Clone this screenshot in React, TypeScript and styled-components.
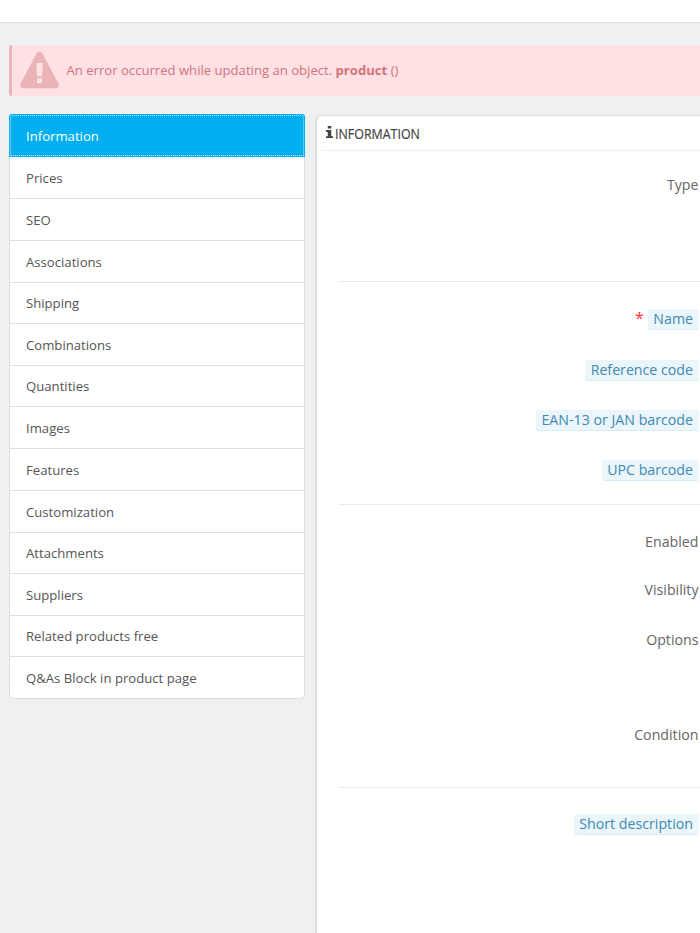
import React from "react";
import styled, { createGlobalStyle } from "styled-components";

const GlobalStyle = createGlobalStyle`
  *, *::before, *::after { box-sizing: border-box; }
  html, body { margin: 0; height: 100%; overflow: hidden; }
  body {
    background: #eff0f2;
    color: #555;
    font-family: "Open Sans", "Liberation Sans", sans-serif;
    font-size: 14.2px;
  }
`;

const Page = styled.div`
  height: 933px;
  overflow: hidden;
  display: flex;
  flex-direction: column;
`;

const TopBar = styled.header`
  flex: none;
  height: 23px;
  background: #fff;
  border-bottom: 1px solid #dcdedf;
`;

const Alert = styled.div`
  flex: none;
  display: flex;
  align-items: center;
  height: 51px;
  margin: 22px 0 0 9px;
  padding-left: 8px;
  background: #ffe1e3;
  border-left: 3px solid #eab3b7;
  border-radius: 3px 0 0 3px;
  color: #d2727c;
`;

const WarningIcon = styled.svg`
  flex: none;
  width: 39px;
  height: 38px;
  margin: -2px 8px 0 -0.5px;
`;

const AlertText = styled.span`
  padding-bottom: 1px;
  font-size: 13.12px;
  line-height: 18px;
  white-space: nowrap;
`;

const Columns = styled.div`
  flex: 1;
  min-height: 0;
  display: flex;
  gap: 11px;
  margin-top: 18px;
  padding-left: 9px;
`;

const Tabs = styled.nav`
  flex: none;
  width: 296px;
  height: 585px;
  display: flex;
  flex-direction: column;
  background: #fff;
  border: 1px solid #dddedf;
  border-radius: 4px;
`;

const Tab = styled.a<{ $active?: boolean; $height: number }>`
  flex: none;
  display: flex;
  align-items: center;
  height: ${(p) => p.$height}px;
  padding: 0.8px 16px 0;
  border-bottom: 1px solid #dfdfdf;
  font-size: 13.15px;
  line-height: 18px;

  &:last-child { border-bottom: 0; padding-top: 0; }

  ${(p) =>
    p.$active &&
    `
    margin: -1px -1px 0;
    padding: 1px 17px 0;
    color: #fff;
    background: #00aff0;
    border: 0;
    outline: 1px dotted #b5e7fa;
    outline-offset: -2px;
    border-radius: 3px 3px 0 0;
  `}
`;

const Panel = styled.main`
  flex: 1;
  min-width: 0;
  margin: 1px 0 0 -1px;
  background: #fff;
  border: solid #dbdee1;
  border-width: 1px 0 0 2px;
  border-radius: 6px 0 0 0;
  padding-left: 5px;
`;

const PanelHeading = styled.h3`
  display: flex;
  align-items: center;
  gap: 2px;
  height: 35px;
  margin: 0;
  padding-left: 4px;
  border-bottom: 1px solid #eee;
`;

const InfoIcon = styled.svg`
  width: 7px;
  height: 12px;
  margin-top: -2px;
`;

const HeadingText = styled.span`
  font-size: 14.8px;
  font-weight: 400;
  line-height: 20px;
  color: #444;
  -webkit-text-stroke: 0.2px #444;
  transform: scaleX(0.84);
  transform-origin: left center;
`;

const Section = styled.section<{ $height: number }>`
  display: flow-root;
  height: ${(p) => p.$height}px;
  margin-left: 16px;
  border-bottom: 1px solid #eaeaea;

  &:last-child { border-bottom: 0; }
`;

const Field = styled.div<{ $before: number }>`
  display: flex;
  justify-content: flex-end;
  align-items: center;
  height: 20px;
  margin-top: ${(p) => p.$before}px;
  padding-right: 1.5px;
  color: #666;
`;

const Hint = styled.span`
  height: 21px;
  padding: 0 5.5px;
  line-height: 19px;
  color: #3f89b3;
  background: #ebf6fb;
  border-bottom: 1px solid #d9ebf3;
  border-radius: 3px;
`;

const Required = styled.span`
  margin: -2px 4px 0 0;
  font-size: 16px;
  line-height: 20px;
  color: #f33;
`;

const tabs: [string, number][] = [
  ["Information", 43],
  ["Prices", 42],
  ["SEO", 42],
  ["Associations", 42],
  ["Shipping", 41],
  ["Combinations", 42],
  ["Quantities", 41],
  ["Images", 42],
  ["Features", 42],
  ["Customization", 42],
  ["Attachments", 41],
  ["Suppliers", 42],
  ["Related products free", 41],
  ["Q&As Block in product page", 41],
];

type FieldDef = { label: string; before: number; hint?: boolean; required?: boolean };

const sections: { height: number; fields: FieldDef[] }[] = [
  { height: 131, fields: [{ label: "Type", before: 23 }] },
  {
    height: 223,
    fields: [
      { label: "Name", before: 27, hint: true, required: true },
      { label: "Reference code", before: 31, hint: true },
      { label: "EAN-13 or JAN barcode", before: 30, hint: true },
      { label: "UPC barcode", before: 30, hint: true },
    ],
  },
  {
    height: 283,
    fields: [
      { label: "Enabled", before: 26 },
      { label: "Visibility", before: 28 },
      { label: "Options", before: 30 },
      { label: "Condition", before: 75 },
    ],
  },
  { height: 145, fields: [{ label: "Short description", before: 26, hint: true }] },
];

export default function App() {
  return (
    <>
      <GlobalStyle />
      <Page>
        <TopBar />
        <Alert>
          <WarningIcon viewBox="0 0 39 38" aria-hidden="true">
            <path
              fill="#eab3b7"
              fillRule="evenodd"
              d="M16.7 2.3Q17.8.5 19.5.5t2.8 1.8l16.1 30.1q1 1.8 0 3.2-.9 1.7-2.8 1.7H3.400q-1.900 0-2.800-1.700-1-1.400 0-3.200zM16.300 12l.7 13.300h5.100l.7-13.300zM16.900 27.200v5h5.200v-5z"
            />
          </WarningIcon>
          <AlertText>
            An error occurred while updating an object. <b>product</b> ()
          </AlertText>
        </Alert>
        <Columns>
          <Tabs>
            {tabs.map(([label, height], i) => (
              <Tab key={label} $active={i === 0} $height={height}>
                {label}
              </Tab>
            ))}
          </Tabs>
          <Panel>
            <PanelHeading>
              <InfoIcon viewBox="0 0 6 11" preserveAspectRatio="none" aria-hidden="true">
                <path fill="#444" d="M1.500 0h3v2.400h-3zM0 3.700h4.500v5.600H6V11H0V9.300h1.500V5.400H0z" />
              </InfoIcon>
              <HeadingText>INFORMATION</HeadingText>
            </PanelHeading>
            {sections.map((section) => (
              <Section key={section.fields[0].label} $height={section.height}>
                {section.fields.map((f) => (
                  <Field key={f.label} $before={f.before}>
                    {f.required && <Required>*</Required>}
                    {f.hint ? <Hint>{f.label}</Hint> : f.label}
                  </Field>
                ))}
              </Section>
            ))}
          </Panel>
        </Columns>
      </Page>
    </>
  );
}
